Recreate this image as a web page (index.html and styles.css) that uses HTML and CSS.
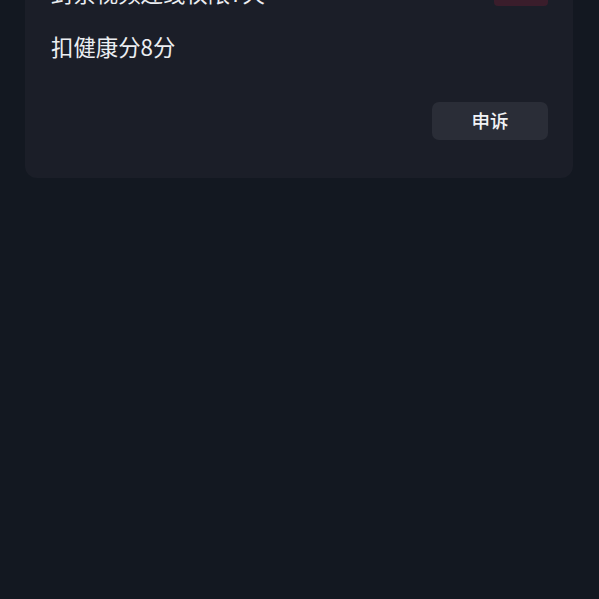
FILE: index.html
```html
<!DOCTYPE html>
<html lang="zh">
<head>
<meta charset="utf-8">
<link rel="stylesheet" href="styles.css">
</head>
<body>
<div class="page">
  <div class="card">
    <div class="row-top">
      <span class="line">封禁视频连线权限7天</span>
      <span class="badge"></span>
    </div>
    <div class="line second">扣健康分8分</div>
    <div class="actions">
      <button class="btn">申诉</button>
    </div>
  </div>
</div>
</body>
</html>
```
FILE: styles.css
```css
html, body {
  margin: 0;
  padding: 0;
  background: #131821;
  height: 100%;
}
body {
  font-family: "Noto Sans CJK SC", "Noto Sans", sans-serif;
  overflow: hidden;
}
.page {
  padding: 0 26px 0 25px;
  margin-top: -44px;
}
.card {
  background: #1b1e28;
  border-radius: 12px;
  padding: 20px 25px 38px 26px;
}
.row-top {
  display: flex;
  justify-content: space-between;
  align-items: center;
  height: 32px;
}
.line {
  color: #eceef2;
  font-size: 22.4px;
  line-height: 32px;
}
.second {
  margin-top: 22px;
}
.badge {
  width: 54px;
  height: 22px;
  border-radius: 4px;
  background: #3a1d2b;
  margin-top: 6px;
}
.actions {
  display: flex;
  justify-content: flex-end;
  margin-top: 40px;
}
.btn {
  width: 116px;
  height: 38px;
  border: none;
  border-radius: 7px;
  background: #2a2d37;
  color: #f2f3f6;
  font-family: "Noto Sans CJK SC", sans-serif;
  font-size: 18.5px;
  font-weight: 500;
  padding: 0 0 3px;
}
```
